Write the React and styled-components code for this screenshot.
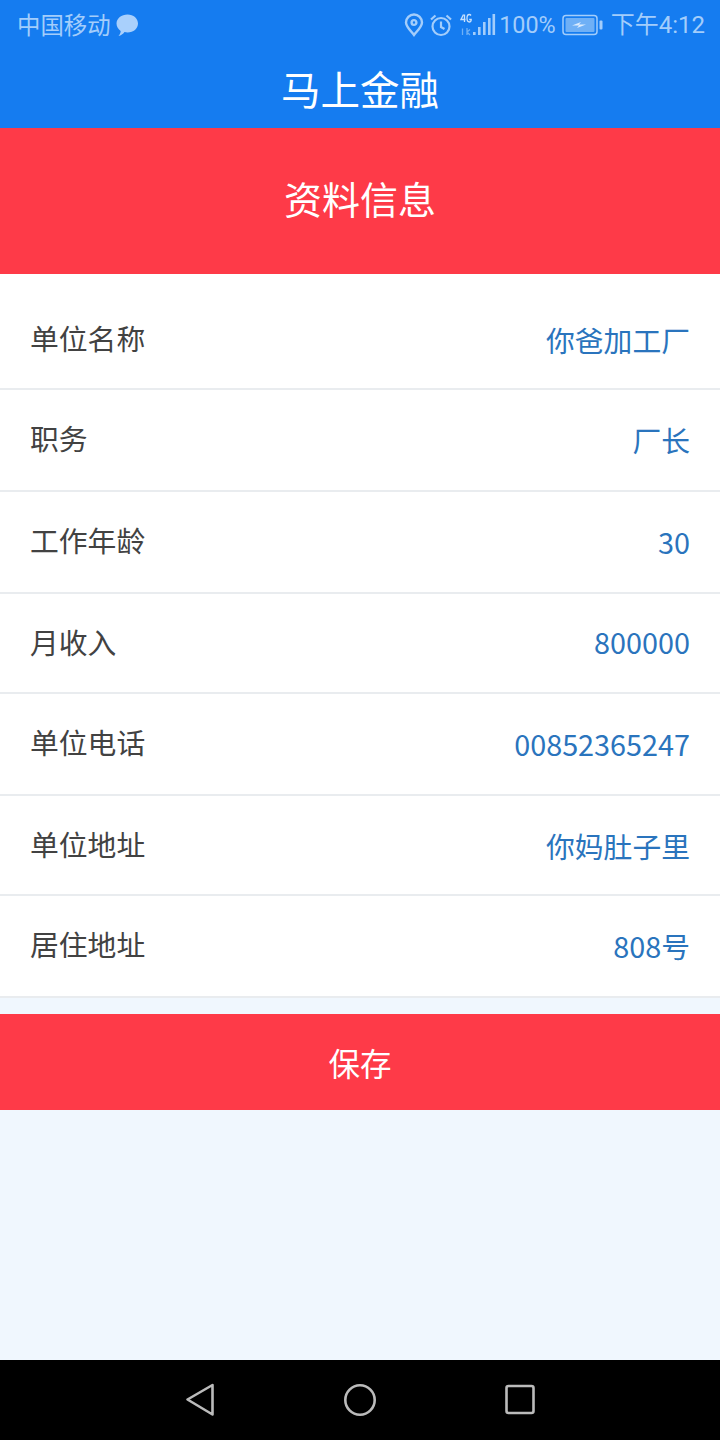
import React from 'react';
import styled, { createGlobalStyle } from 'styled-components';

const Global = createGlobalStyle`
  html, body { margin: 0; padding: 0; background: #f0f7fe; }
  body { font-family: "Noto Sans CJK SC", "Noto Sans", sans-serif; }
`;
const Page = styled.div`
  width: 720px; height: 1440px; display: flex; flex-direction: column; overflow: hidden; background: #f0f7fe;
`;
const StatusBar = styled.div`
  height: 48px; background: #157cf0; display: flex; align-items: center; justify-content: space-between;
  padding: 2px 15px 0 17px; box-sizing: border-box; color: #a3cdfb; font-size: 24px;
`;
const StatusGroup = styled.div`
  display: flex; align-items: center; gap: ${p => p.$gap || 0}px; white-space: nowrap; margin-top: ${p => p.$dy || 0}px;
`;
const StatusText = styled.span`
  font-family: ${p => p.$latin ? '"Roboto", "Noto Sans CJK SC", sans-serif' : '"Noto Sans CJK SC", sans-serif'};
  line-height: 30px; font-size: ${p => p.$size || 24}px; margin-left: ${p => p.$ml || 0}px;
`;
const StatusIcon = styled.svg`
  display: block; flex: none; margin-left: ${p => p.$ml || 0}px;
`;
const AppBar = styled.div`
  height: 80px; background: #157cf0; color: #fff; font-size: 39.5px; display: flex; align-items: center; justify-content: center;
  line-height: 1; box-sizing: border-box;
`;
const Banner = styled.div`
  height: 146px; background: #fe3a48; color: #fff; font-size: 38px; display: flex; align-items: center; justify-content: center;
  padding-bottom: 8px; box-sizing: border-box;
`;
const List = styled.div`
  background: #fff; padding-top: 16px;
`;
const Row = styled.div`
  height: ${p => p.$h}px; box-sizing: border-box; border-bottom: 2px solid #e9ecef; display: flex; align-items: flex-start;
  justify-content: space-between; padding: 0 30px;
`;
const Label = styled.span`
  font-size: 28.8px; line-height: 40px; color: #424242; margin-top: ${p => 28 + (p.$dy || 0)}px;
`;
const Value = styled.span`
  font-size: 28.8px; line-height: 40px; color: #2a74bd; margin-top: ${p => 30 + (p.$dy || 0)}px;
`;
const SaveButton = styled.button`
  display: block; width: 100%; height: 96px; margin-top: 16px; border: 0; padding: 0; background: #fe3a48; color: #fff;
  font-family: inherit; font-size: 31.5px;
`;
const Spacer = styled.div`flex: 1;`;
const NavBar = styled.div`
  height: 80px; background: #000; display: flex; align-items: center; justify-content: center; gap: 104px;
`;
const NavIcon = styled.svg`
  width: 56px; height: 40px; fill: none; stroke: #bbb; stroke-width: 2.6; stroke-linejoin: round;
`;

const rows = [
  { label: '单位名称', value: '你爸加工厂', h: 100 },
  { label: '职务', value: '厂长', h: 102 },
  { label: '工作年龄', value: '30', h: 102 },
  { label: '月收入', value: '800000', h: 100, valueDy: -2 },
  { label: '单位电话', value: '00852365247', h: 102 },
  { label: '单位地址', value: '你妈肚子里', h: 100 },
  { label: '居住地址', value: '808号', h: 102 },
];

export default function App() {
  return (
    <Page>
      <Global />
      <StatusBar>
        <StatusGroup $gap={4} $dy={-3}>
          <StatusText $size={23.4}>中国移动</StatusText>
          <StatusIcon width="24" height="24" viewBox="0 0 24 24" style={{ marginTop: 2 }}>
            <path d="M12.500 1.500C18.500 1.500 23 5.400 23 10.500s-4.500 9-10.500 9c-1 0-2-.1-3-.4C8 21 6 22.800 3.500 23c1.200-1.200 2.100-2.900 2.200-5C3.300 16 1.500 13.500 1.500 10.500c0-5.100 5-9 11-9z" fill="#a9d0fc" />
          </StatusIcon>
        </StatusGroup>
        <StatusGroup>
          <StatusIcon width="20" height="24" viewBox="0 0 20 24" fill="none" stroke="#a3cdfb" strokeWidth="2.400">
            <path d="M10 22C6 17 2 13.500 2 9.500a8 8 0 0 1 16 0c0 4-4 7.500-8 12.500z" />
            <circle cx="10" cy="9.500" r="2.400" />
          </StatusIcon>
          <StatusIcon $ml={5} width="24" height="24" viewBox="0 0 24 24" fill="none" stroke="#a3cdfb" strokeWidth="2.200">
            <circle cx="12" cy="13.500" r="8.500" />
            <path d="M12 8.500v5.500l3.500 2M2 6.500l4.500-4M22 6.500l-4.500-4" />
          </StatusIcon>
          <StatusIcon $ml={7} width="36" height="24" viewBox="0 0 36 24">
            <g fill="#a3cdfb">
              <rect x="13" y="19" width="2.600" height="3" />
              <rect x="18" y="14" width="2.600" height="8" />
              <rect x="23" y="9" width="2.600" height="13" />
              <rect x="28" y="5" width="2.600" height="17" />
              <rect x="32.500" y="1" width="2.600" height="21" />
            </g>
            <path d="M3.500 1.500L1 6.500h4.500M4.500 1.500V9M11 2.500c-.5-.7-1-1-1.700-1C8 1.500 7 3 7 5.300s.9 3.700 2.300 3.700c1.200 0 1.900-.9 1.900-2.500H9.200" fill="none" stroke="#c6e0fd" strokeWidth="1.300" />
            <path d="M2.500 15.500V22M7 15v7M7 19l3-2.500M7 19l3 3" fill="none" stroke="#6fb0f6" strokeWidth="1.300" />
          </StatusIcon>
          <StatusText $latin $size={23.4} $ml={3}>100%</StatusText>
          <StatusIcon $ml={6} width="42" height="22" viewBox="0 0 42 22">
            <rect x="1" y="1.500" width="34" height="19" rx="3" fill="none" stroke="#a3cdfb" strokeWidth="1.500" />
            <rect x="3.500" y="4" width="29" height="14" rx="1" fill="#6fb0f6" />
            <rect x="37.500" y="6.500" width="3" height="9" rx="1" fill="#a3cdfb" />
            <path d="M10 11.500l9-3.500-2 2.500h7l-9 3.500 2-2.500z" fill="#dcecfe" />
          </StatusIcon>
          <StatusText $latin $ml={7}>下午4:12</StatusText>
        </StatusGroup>
      </StatusBar>
      <AppBar>马上金融</AppBar>
      <Banner>资料信息</Banner>
      <List>
        {rows.map(r => (
          <Row key={r.label} $h={r.h}>
            <Label $dy={r.labelDy}>{r.label}</Label>
            <Value $dy={r.valueDy}>{r.value}</Value>
          </Row>
        ))}
      </List>
      <SaveButton>保存</SaveButton>
      <Spacer />
      <NavBar>
        <NavIcon viewBox="0 0 56 40">
          <path d="M15.500 19.500L40.500 5V34.500z" />
        </NavIcon>
        <NavIcon viewBox="0 0 56 40">
          <circle cx="28" cy="20" r="14.700" />
        </NavIcon>
        <NavIcon viewBox="0 0 56 40">
          <rect x="14.500" y="6" width="27" height="27" rx="2" />
        </NavIcon>
      </NavBar>
    </Page>
  );
}
